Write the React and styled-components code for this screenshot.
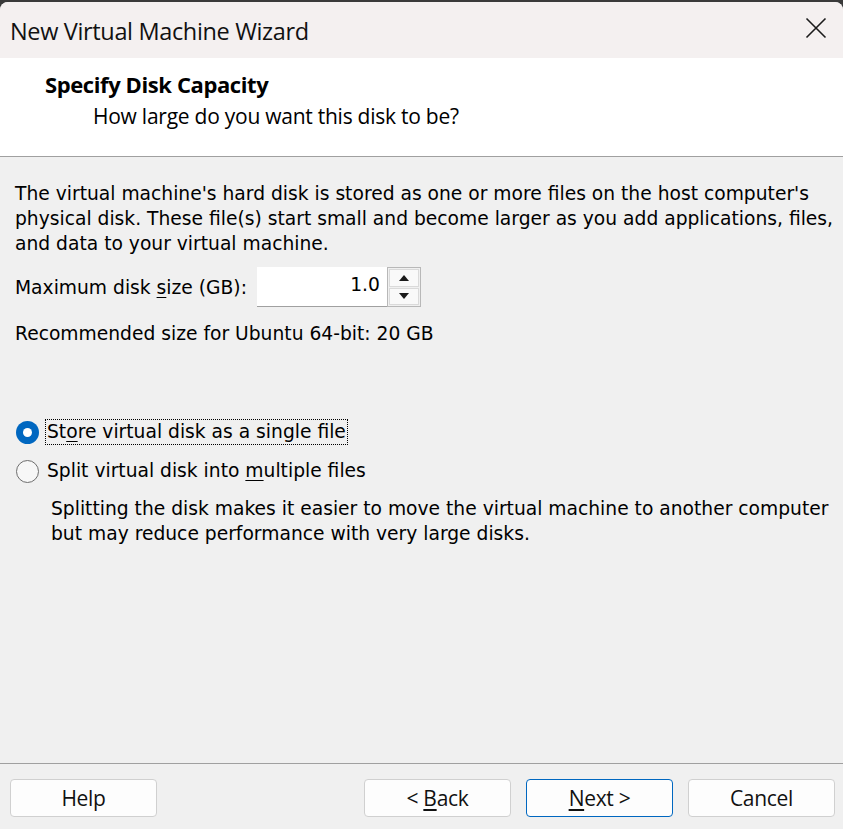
import React from 'react'
import { styled, createGlobalStyle } from 'styled-components'

const GlobalStyle = createGlobalStyle`
  html, body {
    margin: 0;
    padding: 0;
    background: #3a3a3a;
  }
  body {
    font-family: 'DejaVu Sans', Verdana, sans-serif;
    color: #000;
  }
`

function App() {
  return (
    <>
      <GlobalStyle />
      <Window>
        <TitleBar>
          <Title>New Virtual Machine Wizard</Title>
          <CloseButton aria-label="Close">
            <svg width="22" height="22" viewBox="0 0 22 22">
              <path d="M1.5 1.5 L20.5 20.5 M20.5 1.5 L1.5 20.5" stroke="#1b1b1b" strokeWidth="1.6" fill="none" />
            </svg>
          </CloseButton>
        </TitleBar>

        <Header>
          <HeaderTitle>Specify Disk Capacity</HeaderTitle>
          <HeaderSub>How large do you want this disk to be?</HeaderSub>
        </Header>

        <Body>
          <Paragraph>
            The virtual machine's hard disk is stored as one or more files on the host computer's<br />
            physical disk. These file(s) start small and become larger as you add applications, files,<br />
            and data to your virtual machine.
          </Paragraph>

          <SizeRow>
            <span>Maximum disk <Key>s</Key>ize (GB):</span>
            <Spinner>
              <SpinInput defaultValue="1.0" />
              <SpinButtons>
                <SpinButton>
                  <svg width="10" height="6" viewBox="0 0 10 6"><path d="M0 6 L5 0 L10 6 Z" fill="#1a1a1a" /></svg>
                </SpinButton>
                <SpinButton>
                  <svg width="10" height="6" viewBox="0 0 10 6"><path d="M0 0 L5 6 L10 0 Z" fill="#1a1a1a" /></svg>
                </SpinButton>
              </SpinButtons>
            </Spinner>
          </SizeRow>

          <Note>Recommended size for Ubuntu 64-bit: 20 GB</Note>

          <Options>
            <RadioRow>
              <Radio $checked />
              <RadioLabel $focused>St<Key>o</Key>re virtual disk as a single file</RadioLabel>
            </RadioRow>
            <RadioRow>
              <Radio />
              <RadioLabel>Split virtual disk into <Key>m</Key>ultiple files</RadioLabel>
            </RadioRow>
            <Hint>
              Splitting the disk makes it easier to move the virtual machine to another computer<br />
              but may reduce performance with very large disks.
            </Hint>
          </Options>
        </Body>

        <Footer>
          <Button>Help</Button>
          <FooterRight>
            <Button>{'< '}<Key>B</Key>ack</Button>
            <Button $primary><Key>N</Key>{'ext >'}</Button>
            <Button>Cancel</Button>
          </FooterRight>
        </Footer>
      </Window>
    </>
  )
}

export default App

const Window = styled.div`
  margin-top: 2px;
  height: 827px;
  display: flex;
  flex-direction: column;
  background: #f0f0f0;
  border-radius: 8px 8px 0 0;
  overflow: hidden;
`
const TitleBar = styled.div`
  height: 56px;
  flex: none;
  display: flex;
  align-items: center;
  justify-content: space-between;
  padding: 0 16px 0 10px;
  background: #f4f0f0;
`
const Title = styled.div`
  font-family: 'Open Sans', 'Noto Sans', sans-serif;
  font-size: 23.5px;
  letter-spacing: -0.35px;
  color: #111;
  margin-top: 1px;
`
const CloseButton = styled.div`
  width: 22px;
  height: 22px;
  display: flex;
  margin-top: -4px;
`
const Header = styled.div`
  height: 99px;
  flex: none;
  background: #fff;
  border-bottom: 1px solid #a0a0a0;
  box-sizing: border-box;
  padding: 12px 0 0 45px;
  font-family: 'Open Sans', 'Noto Sans', sans-serif;
`
const HeaderTitle = styled.div`
  font-weight: bold;
  font-size: 22px;
  letter-spacing: -0.4px;
  line-height: 28px;
`
const HeaderSub = styled.div`
  font-size: 21px;
  letter-spacing: -0.25px;
  line-height: 28px;
  margin: 4px 0 0 48px;
`
const Body = styled.div`
  flex: 1;
  padding: 24px 0 0 15px;
  font-size: 18.7px;
  line-height: 25px;
  border-bottom: 1px solid #a0a0a0;
`
const Paragraph = styled.p`
  margin: 0;
  white-space: nowrap;
`
const Key = styled.span`
  text-decoration: underline;
  text-underline-offset: 3px;
`
const SizeRow = styled.div`
  display: flex;
  align-items: center;
  gap: 10px;
  margin-top: 11px;
`
const Spinner = styled.div`
  display: flex;
  height: 40px;
`
const SpinInput = styled.input`
  width: 130px;
  box-sizing: border-box;
  border: none;
  border-bottom: 1px solid #a0a0a0;
  background: #fff;
  font: inherit;
  text-align: right;
  padding: 0 7px 4px 0;
  outline: none;
`
const SpinButtons = styled.div`
  display: flex;
  flex-direction: column;
  width: 34px;
  border: 1px solid #b8b8b8;
  box-sizing: border-box;
  background: #f0f0f0;
  padding: 1px;
  gap: 1px;
`
const SpinButton = styled.div`
  flex: 1;
  display: flex;
  align-items: center;
  justify-content: center;
  background: #f9f9f9;
  border: 1px solid #dadada;
`
const Note = styled.div`
  margin-top: 14px;
`
const Options = styled.div`
  margin-top: 74px;
  margin-left: 1px;
  display: flex;
  flex-direction: column;
`
const RadioRow = styled.div`
  display: flex;
  align-items: center;
  gap: 7px;
  height: 24px;
  & + & {
    margin-top: 15px;
  }
`
const Radio = styled.span`
  width: 23px;
  height: 23px;
  box-sizing: border-box;
  border-radius: 50%;
  flex: none;
  position: relative;
  background: ${p => (p.$checked ? '#0067c0' : '#f7f7f7')};
  border: ${p => (p.$checked ? 'none' : '1.5px solid #6e6e6e')};
  &::after {
    content: '';
    display: ${p => (p.$checked ? 'block' : 'none')};
    position: absolute;
    left: 7px;
    top: 7px;
    width: 9px;
    height: 9px;
    border-radius: 50%;
    background: #fff;
  }
`
const RadioLabel = styled.span`
  padding: 0 1px;
  line-height: 24px;
  outline: ${p => (p.$focused ? '1px dotted #000' : 'none')};
`
const Hint = styled.div`
  margin: 13px 0 0 35px;
  white-space: nowrap;
`
const Footer = styled.div`
  height: 65px;
  flex: none;
  display: flex;
  align-items: flex-start;
  justify-content: space-between;
  padding: 15px 8px 0 10px;
  box-sizing: border-box;
`
const FooterRight = styled.div`
  display: flex;
  gap: 15px;
`
const Button = styled.div`
  width: 147px;
  height: 38px;
  box-sizing: border-box;
  display: flex;
  align-items: center;
  justify-content: center;
  white-space: pre;
  background: #fdfdfd;
  border: 1px solid ${p => (p.$primary ? '#0067c0' : '#d0d0d0')};
  border-radius: 4px;
  font-family: 'Open Sans', 'Noto Sans', sans-serif;
  font-size: 21px;
  letter-spacing: -0.3px;
  color: #111;
`
